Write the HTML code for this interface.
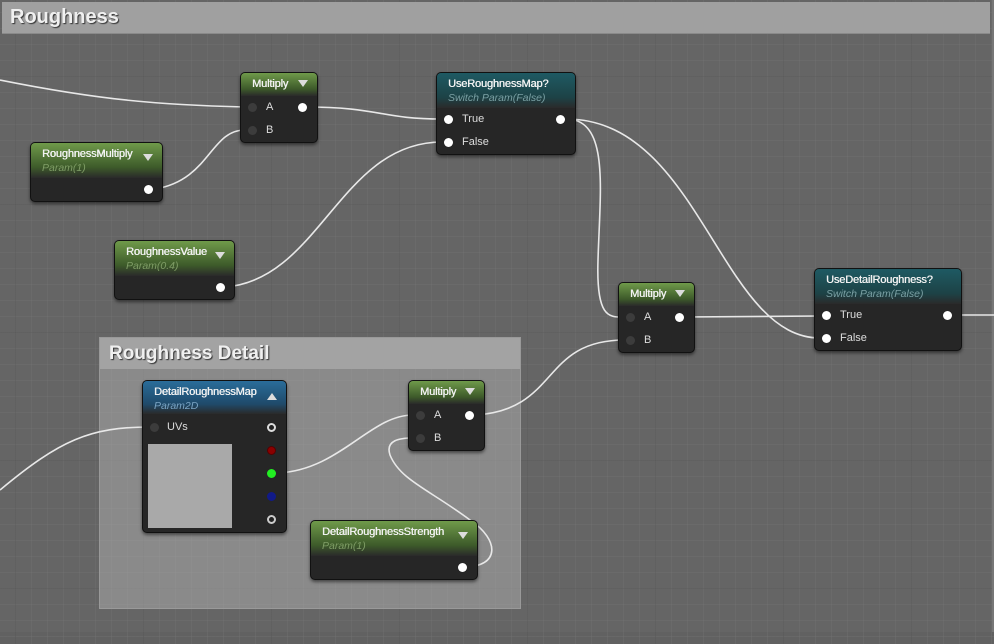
<!DOCTYPE html>
<html><head><meta charset="utf-8"><style>
*{margin:0;padding:0;box-sizing:border-box}
body{width:994px;height:644px;overflow:hidden;position:relative;font-family:"Liberation Sans",sans-serif;
background-color:#616161;
background-image:
linear-gradient(to right,rgba(45,45,45,.18) 1px,transparent 1px),
linear-gradient(to bottom,rgba(45,45,45,.18) 1px,transparent 1px),
linear-gradient(to right,rgba(125,125,125,.22) 1px,transparent 1px),
linear-gradient(to bottom,rgba(125,125,125,.22) 1px,transparent 1px);
background-size:128px 128px,128px 128px,16px 16px,16px 16px;
background-position:15px 76px,15px 76px,15px 12px,15px 12px;}
.cm{position:absolute;}
.node{position:absolute;background:#262626;border:1px solid #111;border-radius:5px;box-shadow:0 2px 3px rgba(0,0,0,.5);color:#ddd;font-size:11px}
.hd{border-radius:4px 4px 0 0;padding:5px 11px 4px;color:#f2f2f2;font-size:11px;letter-spacing:-0.15px;text-shadow:0.4px 0 0 #f2f2f2;position:relative;white-space:nowrap}
.hd i{display:block;font-style:italic;font-weight:normal;font-size:10.5px;margin-top:2px;text-shadow:none;letter-spacing:0}
.g{background:linear-gradient(to bottom,#6f9a4a,#3d5a2a 70%,#2a2a2a)}
.g i{color:#7f9d66}
.t{background:linear-gradient(to bottom,#1e5a63,#1d4246 70%,#2a2a2a)}
.t i{color:#7aa0a4}
.b{background:linear-gradient(to bottom,#2a6d9a,#1f4a6a 70%,#2a2a2a)}
.b i{color:#7aa4c4}
.tri{position:absolute;right:9px;top:7px;width:0;height:0;border-left:5px solid transparent;border-right:5px solid transparent;border-top:7px solid #ddd}
.up{border-top:none;border-bottom:7px solid #ddd}
.row{position:absolute;font-size:11px;color:#ddd}
.pin{position:absolute;width:9px;height:9px;border-radius:50%;background:#fff}
.pd{position:absolute;width:9px;height:9px;border-radius:50%;background:#3c3c3c}
</style></head><body>
<div class="cm" style="left:0;top:0;width:994px;height:632px;background:rgba(150,150,150,.08);border-right:2px solid #777"></div>
<div class="cm" style="left:2px;top:2px;width:988px;height:32px;background:#a0a0a0;border-bottom:1px solid #8a8a8a"></div>
<div class="cm" style="left:10px;top:6px;font-size:20px;font-weight:bold;color:#f0f0f0;text-shadow:1px 1px 1px #333">Roughness</div>
<div class="cm" style="left:99px;top:337px;width:422px;height:272px;background:rgba(185,185,185,.45);border:1px solid #999"></div>
<div class="cm" style="left:100px;top:338px;width:420px;height:31px;background:#a3a3a3"></div>
<div class="cm" style="left:109px;top:343px;font-size:19px;font-weight:bold;color:#f0f0f0;text-shadow:1px 1px 1px #333">Roughness Detail</div>

<svg style="position:absolute;left:0;top:0" width="994" height="644" fill="none" stroke="#e8e8e8" stroke-width="1.6">
<path d="M0 80 C100 100,160 105,245 107"/>
<path d="M155 189 C210 180,210 130,245 130"/>
<path d="M305 107 C380 107,380 119,442 119"/>
<path d="M225 287 C320 280,340 142,442 142"/>
<path d="M566 119 C610 119,600 190,598 260 C596 320,610 317,625 317"/>
<path d="M566 119 C700 119,720 338,820 338"/>
<path d="M682 317 L820 316"/>
<path d="M950 315 L994 315"/>
<path d="M475 415 C560 410,540 340,625 340"/>
<path d="M0 490 C60 440,90 427,150 427"/>
<path d="M278 473 C340 470,370 415,413 415"/>
<path d="M464 567 C500 567,500 540,470 520 C430 490,400 480,390 455 C385 440,400 438,413 438"/>
</svg>

<div class="node" style="left:240px;top:72px;width:78px;height:71px">
<div class="hd g" style="height:23px">Multiply<span class="tri"></span></div>
<div class="pd" style="left:7px;top:30px"></div><div class="row" style="left:25px;top:28px">A</div>
<div class="pd" style="left:7px;top:53px"></div><div class="row" style="left:25px;top:51px">B</div>
<div class="pin" style="left:57px;top:30px"></div>
</div>
<div class="node" style="left:30px;top:142px;width:133px;height:60px">
<div class="hd g" style="height:35px">RoughnessMultiply<i>Param(1)</i><span class="tri" style="top:11px"></span></div>
<div class="pin" style="left:113px;top:42px"></div>
</div>
<div class="node" style="left:114px;top:240px;width:121px;height:60px">
<div class="hd g" style="height:35px">RoughnessValue<i>Param(0.4)</i><span class="tri" style="top:11px"></span></div>
<div class="pin" style="left:101px;top:42px"></div>
</div>
<div class="node" style="left:436px;top:72px;width:140px;height:83px">
<div class="hd t" style="height:35px">UseRoughnessMap?<i>Switch Param(False)</i></div>
<div class="pin" style="left:7px;top:42px"></div><div class="row" style="left:25px;top:40px">True</div>
<div class="pin" style="left:7px;top:65px"></div><div class="row" style="left:25px;top:63px">False</div>
<div class="pin" style="left:119px;top:42px"></div>
</div>
<div class="node" style="left:618px;top:282px;width:77px;height:71px">
<div class="hd g" style="height:23px">Multiply<span class="tri"></span></div>
<div class="pd" style="left:7px;top:30px"></div><div class="row" style="left:25px;top:28px">A</div>
<div class="pd" style="left:7px;top:53px"></div><div class="row" style="left:25px;top:51px">B</div>
<div class="pin" style="left:56px;top:30px"></div>
</div>
<div class="node" style="left:814px;top:268px;width:148px;height:83px">
<div class="hd t" style="height:35px">UseDetailRoughness?<i>Switch Param(False)</i></div>
<div class="pin" style="left:7px;top:42px"></div><div class="row" style="left:25px;top:40px">True</div>
<div class="pin" style="left:7px;top:65px"></div><div class="row" style="left:25px;top:63px">False</div>
<div class="pin" style="left:128px;top:42px"></div>
</div>
<div class="node" style="left:142px;top:380px;width:145px;height:153px">
<div class="hd b" style="height:33px">DetailRoughnessMap<i>Param2D</i><span class="tri up" style="top:12px"></span></div>
<div class="pd" style="left:7px;top:42px"></div><div class="row" style="left:24px;top:40px">UVs</div>
<div style="position:absolute;left:5px;top:63px;width:84px;height:84px;background:#a9a9a9"></div>
<div class="pin" style="left:124px;top:42px;background:#222;border:2px solid #ddd"></div>
<div class="pin" style="left:124px;top:65px;background:#8a0000;border:1px solid #500"></div>
<div class="pin" style="left:124px;top:88px;background:#22ee22"></div>
<div class="pin" style="left:124px;top:111px;background:#111a88"></div>
<div class="pin" style="left:124px;top:134px;background:#222;border:2px solid #ccc"></div>
</div>
<div class="node" style="left:408px;top:380px;width:77px;height:71px">
<div class="hd g" style="height:23px">Multiply<span class="tri"></span></div>
<div class="pd" style="left:7px;top:30px"></div><div class="row" style="left:25px;top:28px">A</div>
<div class="pd" style="left:7px;top:53px"></div><div class="row" style="left:25px;top:51px">B</div>
<div class="pin" style="left:56px;top:30px"></div>
</div>
<div class="node" style="left:310px;top:520px;width:168px;height:60px">
<div class="hd g" style="height:35px">DetailRoughnessStrength<i>Param(1)</i><span class="tri" style="top:11px"></span></div>
<div class="pin" style="left:147px;top:42px"></div>
</div>
</body></html>
